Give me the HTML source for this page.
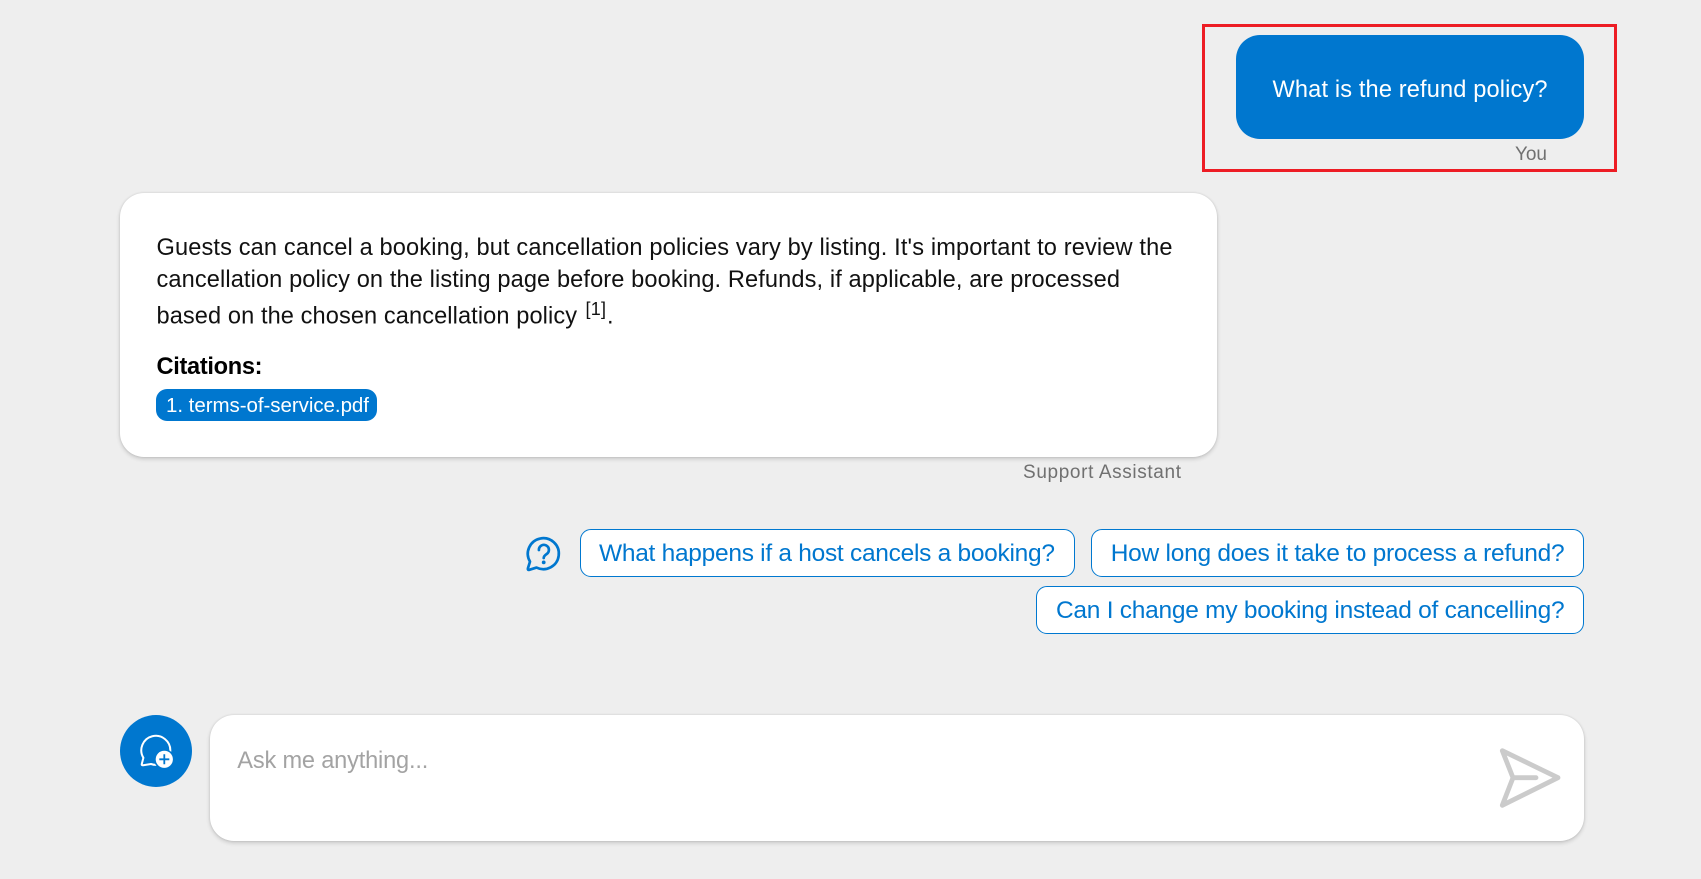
<!DOCTYPE html>
<html lang="en">
<head>
<meta charset="utf-8">
<title>Support Assistant</title>
<style>
html,body{margin:0;padding:0;width:1701px;height:879px;overflow:hidden;background:#eeeeee}
.b{position:absolute;box-sizing:border-box}
.card{background:#fff;border-radius:24px;box-shadow:0 2px 4px rgba(0,0,0,.16),0 0 2px rgba(0,0,0,.12)}
.chip{background:#fff;border:1px solid #0078d0;border-radius:11px}
svg{position:absolute;left:0;top:0}
text{font-family:"Liberation Sans",Arial,sans-serif;font-size:23.6px;fill:#111;white-space:pre}
</style>
</head>
<body>
<div class="b" style="left:1202px;top:24px;width:415px;height:148px;border:3px solid #ed1c24"></div>
<div class="b" style="left:1236px;top:35px;width:348px;height:104px;border-radius:24px;background:#0077cf"></div>
<div class="b card" style="left:120px;top:193px;width:1097px;height:264px"></div>
<div class="b" style="left:156px;top:389px;width:221px;height:32px;border-radius:11px;background:#0077cf"></div>
<div class="b chip" style="left:580px;top:529px;width:495px;height:48px"></div>
<div class="b chip" style="left:1091px;top:529px;width:493px;height:48px"></div>
<div class="b chip" style="left:1036px;top:586px;width:548px;height:48px"></div>
<div class="b" style="left:120px;top:715px;width:72px;height:72px;border-radius:50%;background:#0077cf"></div>
<div class="b card" style="left:210px;top:715px;width:1374px;height:126px"></div>
<svg width="1701" height="879" viewBox="0 0 1701 879" xmlns="http://www.w3.org/2000/svg">
  <text x="1272.5" y="97" textLength="275" lengthAdjust="spacing" style="fill:#fff">What is the refund policy?</text>
  <text x="1515" y="160" textLength="32" lengthAdjust="spacing" style="fill:#707070;font-size:19px">You</text>

  <text x="156.5" y="255" textLength="1016" lengthAdjust="spacing">Guests can cancel a booking, but cancellation policies vary by listing. It's important to review the</text>
  <text x="156.5" y="287" textLength="963.5" lengthAdjust="spacing">cancellation policy on the listing page before booking. Refunds, if applicable, are processed</text>
  <text x="156.5" y="323.5" textLength="420.5" lengthAdjust="spacing">based on the chosen cancellation policy</text>
  <text x="585.5" y="315" textLength="20.5" lengthAdjust="spacing" style="font-size:18px">[1]</text>
  <text x="607" y="323.5">.</text>
  <text x="156.5" y="374" textLength="106" lengthAdjust="spacing" style="font-weight:700;fill:#000">Citations:</text>
  <text x="166" y="412" textLength="203" lengthAdjust="spacing" style="fill:#fff;font-size:20.5px">1. terms-of-service.pdf</text>
  <text x="1023" y="478" textLength="158" lengthAdjust="spacing" style="fill:#707070;font-size:19px">Support Assistant</text>

  <path d="M536.5 567.6 A15.5 15.5 0 1 0 530 561.6 L527.9 568.4 Q527.5 570.2 529.3 569.8 Z" fill="none" stroke="#0077cf" stroke-width="2.7" stroke-linejoin="round"/>
  <path d="M538.9 550 a5 5 0 1 1 7.8 4 c-1.9 1.3 -3 2.2 -3 4" fill="none" stroke="#0077cf" stroke-width="2.7" stroke-linecap="round"/>
  <circle cx="543.7" cy="562.4" r="1.9" fill="#0077cf"/>

  <text x="599" y="561" textLength="456" lengthAdjust="spacing" style="fill:#0077cf;font-size:24.5px">What happens if a host cancels a booking?</text>
  <text x="1110.7" y="561" textLength="454" lengthAdjust="spacing" style="fill:#0077cf;font-size:24.5px">How long does it take to process a refund?</text>
  <text x="1056" y="618" textLength="508.6" lengthAdjust="spacing" style="fill:#0077cf;font-size:24.5px">Can I change my booking instead of cancelling?</text>

  <path d="M151 764 A14.5 14.5 0 1 0 143.4 757.8 L141.8 763.9 Q141.4 765.6 143.2 765.2 Z" fill="none" stroke="#fff" stroke-width="2" stroke-linejoin="round"/>
  <circle cx="164.3" cy="759.3" r="10.2" fill="#0077cf"/>
  <circle cx="164.3" cy="759.3" r="8.6" fill="#fff"/>
  <path d="M164.3 754.3 v10 M159.3 759.3 h10" stroke="#0077cf" stroke-width="1.8" fill="none"/>

  <text x="237.3" y="768" textLength="191" lengthAdjust="spacing" style="fill:#a3a3a3">Ask me anything...</text>

  <path d="M1502.3 750.7 L1558 777.7 L1502.3 805.3 L1513 777.7 Z M1513 777.7 H1536" fill="none" stroke="#cbcbcb" stroke-width="4.8" stroke-linejoin="round" stroke-linecap="round"/>
</svg>
</body>
</html>
